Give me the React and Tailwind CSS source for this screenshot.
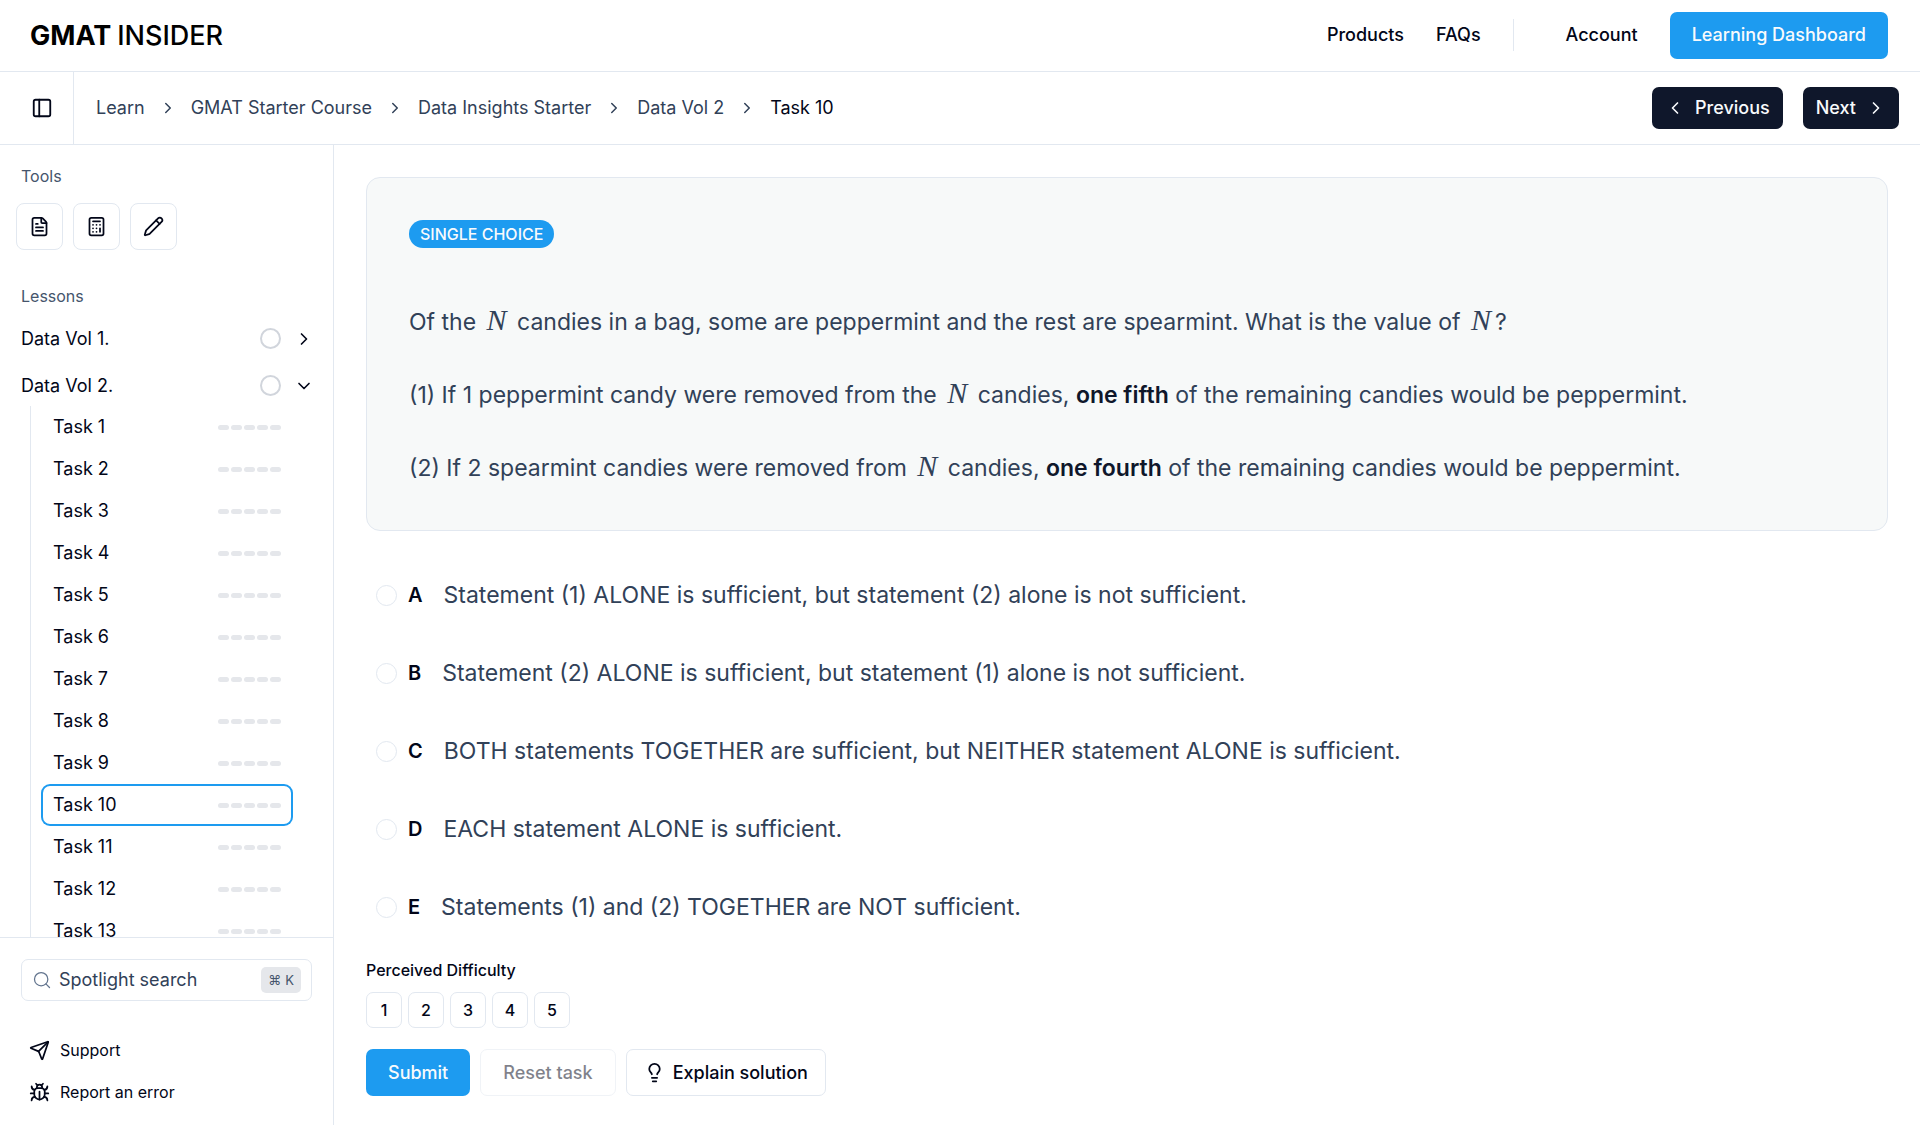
import { useState } from "react";
import {
  Bug,
  Calculator,
  ChevronDown,
  ChevronLeft,
  ChevronRight,
  FileText,
  Lightbulb,
  PanelLeft,
  Pencil,
  Search,
  Send,
} from "lucide-react";

const crumbs = ["Learn", "GMAT Starter Course", "Data Insights Starter", "Data Vol 2"];
const tasks = Array.from({ length: 13 }, (_, i) => `Task ${i + 1}`);
const tools = [
  { label: "Notes", Icon: FileText },
  { label: "Calculator", Icon: Calculator },
  { label: "Whiteboard", Icon: Pencil },
];
const options = [
  ["A", "Statement (1) ALONE is sufficient, but statement (2) alone is not sufficient."],
  ["B", "Statement (2) ALONE is sufficient, but statement (1) alone is not sufficient."],
  ["C", "BOTH statements TOGETHER are sufficient, but NEITHER statement ALONE is sufficient."],
  ["D", "EACH statement ALONE is sufficient."],
  ["E", "Statements (1) and (2) TOGETHER are NOT sufficient."],
];

function N() {
  return <i className="mx-1 font-['Liberation_Serif'] text-[30px] leading-none">N</i>;
}

function Header() {
  return (
    <header className="flex h-[72px] shrink-0 items-center justify-between border-b border-slate-200 pr-8 pb-px pl-[30px]">
      <a href="#home" className="flex items-center gap-1.5 text-[27px] leading-none text-black">
        <span className="font-bold">GMAT</span>
        <span className="font-medium">INSIDER</span>
      </a>
      <nav className="flex items-center font-medium">
        <a href="#products" className="mr-8">Products</a>
        <a href="#faqs">FAQs</a>
        <span className="mx-8 h-8 w-px bg-slate-200" />
        <a href="#account" className="mr-8 ml-5">Account</a>
        <a href="#dashboard" className="flex h-[47px] items-center rounded-[7px] bg-[#1d9bf0] px-[22px] text-slate-50">
          Learning Dashboard
        </a>
      </nav>
    </header>
  );
}

function TopBar() {
  return (
    <div className="flex h-[73px] shrink-0 items-center border-b border-slate-200 pr-[21px]">
      <div className="flex h-full w-[74px] shrink-0 items-center justify-end border-r border-slate-200 pr-5">
        <button type="button" aria-label="Toggle sidebar">
          <PanelLeft size={22} />
        </button>
      </div>
      <nav aria-label="Breadcrumb" className="flex flex-1 items-center gap-3.5 pl-[22px] text-slate-700">
        {crumbs.map((c) => (
          <span key={c} className="flex items-center gap-3.5">
            <a href="#crumb">{c}</a>
            <ChevronRight size={18} />
          </span>
        ))}
        <span className="text-slate-950">Task 10</span>
      </nav>
      <div className="flex gap-5 font-medium text-slate-50">
        <button type="button" className="flex h-[42px] items-center gap-2.5 rounded-[7px] bg-slate-900 px-[13px]">
          <ChevronLeft size={20} />
          Previous
        </button>
        <button type="button" className="flex h-[42px] items-center gap-2.5 rounded-[7px] bg-slate-900 px-[13px]">
          Next
          <ChevronRight size={20} />
        </button>
      </div>
    </div>
  );
}

function Lesson({ name, open }) {
  const Chevron = open ? ChevronDown : ChevronRight;
  return (
    <button type="button" aria-expanded={open} className="flex h-[47px] w-full items-center pr-[19px] pl-[21px]">
      <span className="flex-1 text-left">{name}</span>
      <span className="mr-[13px] size-[21px] rounded-full border-2 border-gray-300" />
      <Chevron size={20} />
    </button>
  );
}

function Sidebar() {
  return (
    <aside className="flex w-[334px] shrink-0 flex-col border-r border-slate-200">
      <div className="min-h-0 flex-1 overflow-hidden">
        <h2 className="px-[21px] pt-[19px] text-[16px] leading-6 text-slate-600">Tools</h2>
        <div className="mt-[15px] flex gap-2.5 px-4">
          {tools.map(({ label, Icon }) => (
            <button
              key={label}
              type="button"
              aria-label={label}
              className="flex size-[47px] items-center justify-center rounded-[8px] border border-slate-200"
            >
              <Icon size={21} />
            </button>
          ))}
        </div>
        <h2 className="mt-[34px] mb-[7px] px-[21px] text-[16px] leading-6 text-slate-600">Lessons</h2>
        <Lesson name="Data Vol 1." open={false} />
        <Lesson name="Data Vol 2." open />
        <ul className="-mt-[3px] mr-10 ml-[30px] border-l border-slate-200 pl-2.5">
          {tasks.map((t) => (
            <li key={t}>
              <a
                href="#task"
                aria-current={t === "Task 10" ? "page" : undefined}
                className="flex h-[42px] items-center justify-between rounded-[9px] px-3 ring-[#1d9bf0] ring-inset aria-[current=page]:ring-2"
              >
                {t}
                <span className="flex gap-0.5">
                  {[0, 1, 2, 3, 4].map((i) => (
                    <span key={i} className="h-[5px] w-[11px] rounded-full bg-gray-200" />
                  ))}
                </span>
              </a>
            </li>
          ))}
        </ul>
      </div>
      <div className="shrink-0 border-t border-slate-200 px-[21px] pt-[21px] pb-3">
        <label className="flex h-[42px] items-center rounded-[7px] border border-slate-200 px-2.5">
          <Search size={20} strokeWidth={1.5} className="shrink-0 text-slate-500" />
          <input
            type="text"
            aria-label="Spotlight search"
            placeholder="Spotlight search"
            className="ml-[7px] w-0 flex-1 outline-none placeholder:text-slate-700"
          />
          <kbd className="flex h-[26px] items-center gap-1 rounded-[5px] bg-gray-200 px-[7px] font-[Inter] text-[13px] text-slate-600">
            <span>⌘</span>K
          </kbd>
        </label>
        <div className="mt-7 flex flex-col text-[16px]">
          <a href="#support" className="flex h-[42px] items-center gap-2.5 pl-2">
            <Send size={21} />
            Support
          </a>
          <a href="#report" className="flex h-[42px] items-center gap-2.5 pl-2">
            <Bug size={21} />
            Report an error
          </a>
        </div>
      </div>
    </aside>
  );
}

function Task() {
  const [choice, setChoice] = useState(null);
  return (
    <main className="min-w-0 flex-1 overflow-hidden px-8 pt-8">
      <section className="rounded-[14px] border border-slate-200 bg-[#f7f9f9] px-[42px] pt-[42px] pb-11">
        <span className="flex h-7 w-fit items-center rounded-full bg-[#1d9bf0] px-[11px] text-[16px] font-medium text-slate-50">
          SINGLE CHOICE
        </span>
        <div className="mt-14 flex flex-col gap-[37px] text-[23px] leading-9 text-slate-700">
          <p>
            Of the <N /> candies in a bag, some are peppermint and the rest are spearmint. What is the value of <N />?
          </p>
          <p>
            (1) If 1 peppermint candy were removed from the <N /> candies,{" "}
            <strong className="font-semibold text-slate-900">one fifth</strong> of the remaining candies would be
            peppermint.
          </p>
          <p>
            (2) If 2 spearmint candies were removed from <N /> candies,{" "}
            <strong className="font-semibold text-slate-900">one fourth</strong> of the remaining candies would be
            peppermint.
          </p>
        </div>
      </section>
      <div role="radiogroup" aria-label="Answer" className="mt-[25px] flex flex-col">
        {options.map(([letter, text]) => (
          <label key={letter} className="flex h-[78px] items-center pl-2.5">
            <input
              type="radio"
              name="answer"
              checked={choice === letter}
              onChange={() => setChoice(letter)}
              className="size-[21px] appearance-none rounded-full border border-slate-200 checked:border-[6px] checked:border-[#1d9bf0]"
            />
            <span className="mr-[21px] ml-[11px] text-[20px] font-semibold text-slate-950">{letter}</span>
            <span className="text-[23px] text-slate-700">{text}</span>
          </label>
        ))}
      </div>
      <p className="mt-3 text-[16px] leading-6 font-medium">Perceived Difficulty</p>
      <div className="mt-2.5 flex gap-1.5 text-[16px] font-medium">
        {[1, 2, 3, 4, 5].map((n) => (
          <button key={n} type="button" className="size-9 rounded-[7px] border border-slate-200">
            {n}
          </button>
        ))}
      </div>
      <div className="mt-[21px] flex gap-2.5 font-medium">
        <button type="button" className="h-[47px] rounded-[7px] bg-[#1d9bf0] px-[22px] text-slate-50">
          Submit
        </button>
        <button type="button" disabled className="h-[47px] rounded-[7px] border border-slate-200 px-[22px] opacity-50">
          Reset task
        </button>
        <button type="button" className="flex h-[47px] items-center gap-2 rounded-[7px] border border-slate-200 px-[17px]">
          <Lightbulb size={21} />
          Explain solution
        </button>
      </div>
    </main>
  );
}

export default function App() {
  return (
    <div className="flex h-screen flex-col bg-white font-[Inter,sans-serif] text-[18px] leading-7 text-slate-950">
      <Header />
      <TopBar />
      <div className="flex min-h-0 flex-1">
        <Sidebar />
        <Task />
      </div>
    </div>
  );
}
